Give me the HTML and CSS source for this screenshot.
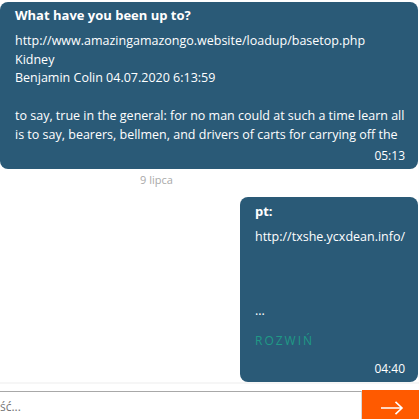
FILE: index.html
```html
<!DOCTYPE html>
<html lang="pl">
<head>
<meta charset="utf-8">
<link rel="stylesheet" href="styles.css">
</head>
<body>
<div class="chat">
  <div class="messages">
    <div class="bubble bubble-in">
      <div class="title">What have you been up to?</div>
      <div class="body">
        <div>http://www.amazingamazongo.website/loadup/basetop.php</div>
        <div>Kidney</div>
        <div>Benjamin Colin 04.07.2020 6:13:59</div>
        <div class="blank"></div>
        <div>to say, true in the general: for no man could at such a time learn all</div>
        <div>is to say, bearers, bellmen, and drivers of carts for carrying off the</div>
      </div>
      <div class="time">05:13</div>
    </div>
    <div class="date">9 lipca</div>
    <div class="row-out">
      <div class="bubble bubble-out">
        <div class="title">pt:</div>
        <div class="body">
          <div>http://txshe.ycxdean.info/</div>
          <div class="spacer"></div>
          <div>...</div>
        </div>
        <div class="expand">ROZWIŃ</div>
        <div class="time">04:40</div>
      </div>
    </div>
  </div>
  <div class="composer">
    <div class="input">ść...</div>
    <button class="send" aria-label="Wyślij">
      <svg width="24" height="14" viewBox="0 0 24 14"><path d="M1 7H22M15.5 0.8L22 7L15.5 13.2" fill="none" stroke="#fff" stroke-width="1.6"/></svg>
    </button>
  </div>
</div>
</body>
</html>
```
FILE: styles.css
```css
html, body {
  margin: 0;
  padding: 0;
  background: #fff;
}
body {
  font-family: "Open Sans", "Noto Sans", sans-serif;
  font-size: 12.5px;
  line-height: 18.7px;
  color: #fff;
  width: 419px;
  height: 419px;
  overflow: hidden;
}
.chat {
  display: flex;
  flex-direction: column;
  height: 419px;
}
.messages {
  display: flex;
  flex-direction: column;
  padding-top: 2px;
}
.bubble {
  background: #2a5a77;
  border-radius: 8px;
  display: flex;
  flex-direction: column;
}
.body {
  white-space: nowrap;
}
.bubble-in {
  margin: 0 1px 0 0;
  padding: 4px 13px 4px 15px;
}
.bubble-in .time {
  margin-top: 2px;
}
.title {
  font-weight: 700;
  font-size: 13px;
  line-height: 19px;
  margin-bottom: 7px;
}
.blank {
  height: 18.7px;
}
.time {
  align-self: flex-end;
  font-size: 12px;
  line-height: 19px;
}
.date {
  font-size: 11px;
  color: #a9a9a9;
  line-height: 16px;
  padding: 3px 0 0 140px;
  height: 25px;
}
.row-out {
  display: flex;
  justify-content: flex-end;
  padding-right: 1px;
}
.bubble-out {
  width: 178px;
  box-sizing: border-box;
  padding: 5px 13px 4px 15px;
}
.spacer {
  height: 55px;
}
.expand {
  color: #1f9a86;
  font-size: 12px;
  letter-spacing: 2px;
  margin-top: 10px;
  line-height: 19px;
}
.bubble-out .time {
  margin-top: 9px;
}
.composer {
  border-top: 2px solid #f6f6f6;
  padding-top: 7px;
  display: flex;
  flex: 1;
  min-height: 0;
}
.input {
  flex: 1;
  border-top: 1px solid #a8a8a8;
  border-right: 1px solid #d8d8d8;
  color: #777;
  font-size: 12px;
  padding: 6px 0 0 0;
  line-height: 18px;
}
.send {
  width: 57px;
  border: none;
  background: #ff5a00;
  padding: 11px 0 0 0;
  margin: -1px 0 0 0;
  display: flex;
  align-items: flex-start;
  justify-content: center;
}
.send svg {
  display: block;
  margin-left: 2px;
}
```
